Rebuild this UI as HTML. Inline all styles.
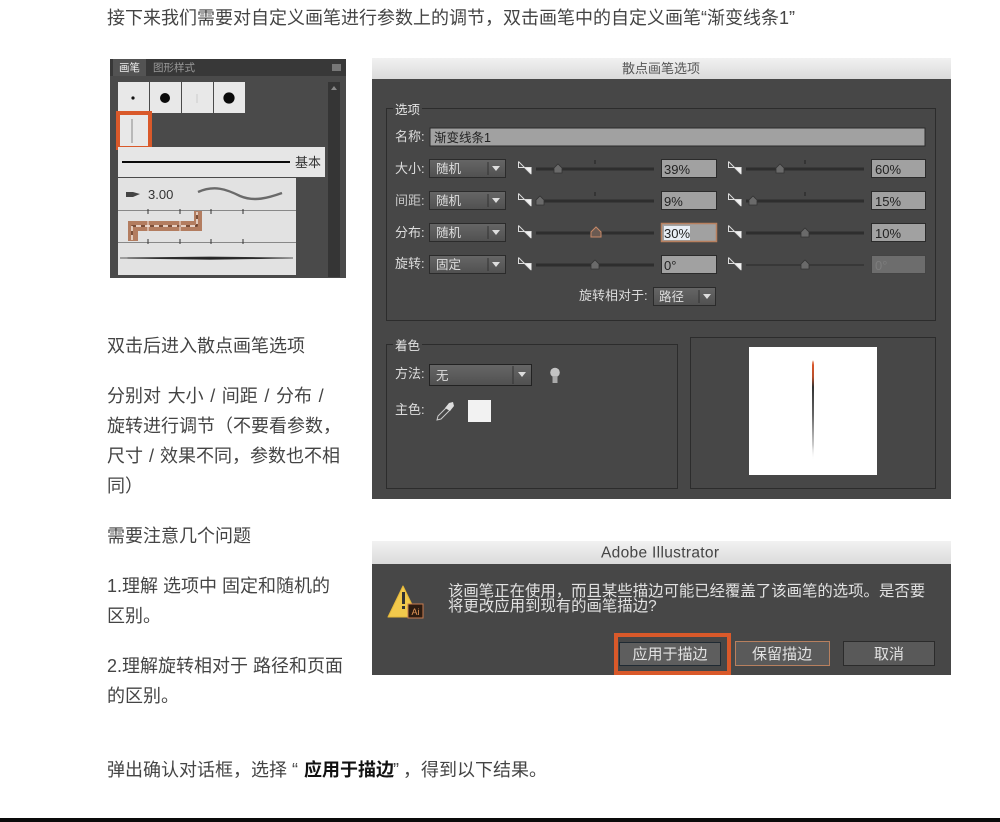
<!DOCTYPE html>
<html lang="zh-CN">
<head>
<meta charset="utf-8">
<title>散点画笔选项</title>
<style>
html,body{margin:0;padding:0;background:#fff}
body{width:1000px;height:822px;position:relative;overflow:hidden;font-family:"Liberation Sans","Noto Sans CJK SC",sans-serif}
p{position:absolute;left:107px;margin:0;font-size:18px;line-height:30px;color:#444;white-space:nowrap}
b{color:#111;font-weight:700;margin-left:6px;margin-right:-1px}
svg{position:absolute;left:0;top:0;filter:blur(.3px)}
svg text{font-family:"Liberation Sans","Noto Sans CJK SC",sans-serif}
#bar{position:absolute;left:0;top:818px;width:1000px;height:4px;background:#0a0a0a}
</style>
</head>
<body>
<p style="top:3px">接下来我们需要对自定义画笔进行参数上的调节，双击画笔中的自定义画笔“渐变线条1”</p>
<p style="top:331px">双击后进入散点画笔选项</p>
<p style="top:381px"><span style="word-spacing:1.6px">分别对 大小 / 间距 / 分布 /</span><br>旋转进行调节（不要看参数，<br><span style="word-spacing:1px">尺寸 / 效果不同，参数也不相</span><br>同）</p>
<p style="top:521px">需要注意几个问题</p>
<p style="top:571px">1.理解 选项中 固定和随机的<br>区别。</p>
<p style="top:651px">2.理解旋转相对于 路径和页面<br>的区别。</p>
<p style="top:755px">弹出确认对话框，选择 “<b>应用于描边</b>”<span style="margin-left:4px">，得到以下结果。</span></p>

<svg width="1000" height="822" viewBox="0 0 1000 822" xmlns="http://www.w3.org/2000/svg">
<defs>
<linearGradient id="tb" x1="0" y1="0" x2="0" y2="1"><stop offset="0" stop-color="#f1f1f1"/><stop offset="1" stop-color="#dadada"/></linearGradient>
<linearGradient id="cb" x1="0" y1="0" x2="0" y2="1"><stop offset="0" stop-color="#666"/><stop offset="1" stop-color="#505050"/></linearGradient>
<linearGradient id="pv" x1="0" y1="0" x2="0" y2="1"><stop offset="0" stop-color="#f3c8b4"/><stop offset=".05" stop-color="#d8562a"/><stop offset=".17" stop-color="#b8502e"/><stop offset=".27" stop-color="#333"/><stop offset=".55" stop-color="#666"/><stop offset="1" stop-color="#fff"/></linearGradient>
<g id="tri"><path d="M6 6H13.500V13.500Z" fill="#f2f2f2"/><path d="M.5 .5L13 13M.5 .5V6.500H13" fill="none" stroke="#ddd" stroke-width="1"/></g>
<g id="th"><path d="M-4 5V0L0-4L4 0V5Z" fill="#6a6a6a" stroke="#333" stroke-width=".8"/></g>
<g id="ar"><path d="M-4 0H4L0 5Z" fill="#ddd"/></g>
</defs>

<!-- brush panel -->
<rect x="110" y="59" width="236" height="219" fill="#4a4a4a"/>
<rect x="110" y="59" width="236" height="17" fill="#383838"/>
<rect x="113" y="59" width="33" height="17" fill="#535353"/>
<text x="119" y="71" font-size="10.500" fill="#eee">画笔</text>
<text x="153" y="71" font-size="10.500" fill="#9a9a9a">图形样式</text>
<rect x="332" y="64" width="9" height="7" fill="#777"/>
<rect x="328" y="82" width="12" height="195" fill="#353535"/>
<path d="M334 86L337 90H331Z" fill="#888"/>
<rect x="118" y="82" width="31" height="31" fill="#e8e8e8"/>
<rect x="150" y="82" width="31" height="31" fill="#e8e8e8"/>
<rect x="182" y="82" width="31" height="31" fill="#e8e8e8"/>
<rect x="214" y="82" width="31" height="31" fill="#e8e8e8"/>
<circle cx="133" cy="98" r="1.600" fill="#111"/>
<circle cx="165" cy="98" r="5" fill="#0a0a0a"/>
<path d="M197 94V103" stroke="#ccc" stroke-width="1"/>
<circle cx="229" cy="98" r="5.600" fill="#0a0a0a"/>
<rect x="118" y="113" width="32" height="35" fill="#e8e8e8"/>
<rect x="118" y="113" width="32" height="35" fill="none" stroke="#d9592a" stroke-width="4"/>
<path d="M132 119V143" stroke="#888" stroke-width="1"/>
<rect x="118" y="147" width="207" height="30" fill="#e6e6e6"/>
<rect x="122" y="161" width="168" height="2" fill="#0a0a0a"/>
<text x="295" y="167" font-size="13" fill="#333">基本</text>
<rect x="118" y="178" width="178" height="32" fill="#e2e2e2"/>
<path d="M126 192H133L140 194L133 197H126Z" fill="#444"/>
<text x="148" y="199" font-size="13" fill="#333">3.00</text>
<path d="M198 192C214 185 226 189 240 196C254 202 268 198 282 193" fill="none" stroke="#6a6a6a" stroke-width="2.400"/>
<rect x="118" y="211" width="178" height="31" fill="#e2e2e2"/>
<path d="M128 221H194V210H202V231H138V241H128Z" fill="#b37d60"/>
<path d="M132 240V226H197V212" fill="none" stroke="#5a3320" stroke-width="1.200"/>
<path d="M132 240V226H197V212" fill="none" stroke="#fff3ea" stroke-width="1.400" stroke-dasharray="5 4"/>
<path d="M148 221V231M180 221V231" stroke="#f4e8df"/>
<rect x="118" y="243" width="178" height="32" fill="#e2e2e2"/>
<path d="M120 258L210 257L293 258L210 259.400Z" fill="#222" stroke="#333" stroke-width=".8"/>
<path d="M118 210.500H296M118 242.500H296" stroke="#888" stroke-width="1"/>
<path d="M148 209V214M180 209V214M211 209V214M243 209V214M148 239V244M180 239V244M211 239V244M243 239V244" stroke="#333"/>

<!-- brush options dialog -->
<rect x="372" y="58" width="579" height="441" fill="#474747"/>
<rect x="372" y="58" width="579" height="21" fill="url(#tb)"/>
<text x="661" y="73" font-size="13" fill="#555" text-anchor="middle">散点画笔选项</text>

<rect x="386.500" y="108.500" width="549" height="212" fill="none" stroke="#2c2c2c"/>
<rect x="393" y="102" width="29" height="12" fill="#474747"/>
<text x="395" y="114" font-size="12.500" fill="#e4e4e4">选项</text>

<text x="395" y="141" font-size="13" fill="#ddd">名称:</text>
<rect x="430" y="128" width="495" height="18" fill="#a1a1a1" stroke="#2b2b2b"/>
<text x="434" y="142" font-size="12.500" fill="#222">渐变线条1</text>

<!-- rows -->
<g font-size="13" fill="#ddd">
<text x="395" y="173">大小:</text>
<text x="395" y="205" fill="#c8c8c8">间距:</text>
<text x="395" y="237">分布:</text>
<text x="395" y="268">旋转:</text>
<text x="579" y="300">旋转相对于:</text>
</g>
<g id="combos" font-size="12.500" fill="#ddd">
<rect x="429.500" y="159.500" width="76" height="18" fill="url(#cb)" stroke="#2b2b2b"/>
<rect x="429.500" y="191.500" width="76" height="18" fill="url(#cb)" stroke="#2b2b2b"/>
<rect x="429.500" y="223.500" width="76" height="18" fill="url(#cb)" stroke="#2b2b2b"/>
<rect x="429.500" y="255.500" width="76" height="18" fill="url(#cb)" stroke="#2b2b2b"/>
<rect x="653.500" y="287.500" width="62" height="18" fill="url(#cb)" stroke="#2b2b2b"/>
<text x="436" y="173">随机</text>
<text x="436" y="205">随机</text>
<text x="436" y="237">随机</text>
<text x="436" y="269">固定</text>
<text x="659" y="301">路径</text>
<path d="M488 162V175M488 194V207M488 226V239M488 258V271M699 290V303" stroke="#333"/>
<use href="#ar" x="496" y="166"/><use href="#ar" x="496" y="198"/><use href="#ar" x="496" y="230"/><use href="#ar" x="496" y="262"/><use href="#ar" x="707" y="294"/>
</g>

<!-- sliders -->
<g>
<use href="#tri" x="518" y="161"/><use href="#tri" x="518" y="193"/><use href="#tri" x="518" y="225"/><use href="#tri" x="518" y="257"/>
<use href="#tri" x="728" y="161"/><use href="#tri" x="728" y="193"/><use href="#tri" x="728" y="225"/><use href="#tri" x="728" y="257"/>
<path d="M536 169H654M536 201H654M536 233H654M536 265H654M746 169H864M746 201H864M746 233H864" stroke="#2e2e2e" stroke-width="3"/>
<path d="M746 265H864" stroke="#383838" stroke-width="2"/>
<path d="M595 160V164M595 192V196M805 160V164M805 192V196" stroke="#222"/>
<use href="#th" x="558" y="168"/><use href="#th" x="540" y="200"/><use href="#th" x="595" y="264"/>
<path d="M591 237V232L596 227L601 232V237Z" fill="#6a5a52" stroke="#c98a68"/>
<use href="#th" x="780" y="168"/><use href="#th" x="753" y="200"/><use href="#th" x="805" y="232"/><use href="#th" x="805" y="264"/>
</g>

<!-- value fields -->
<g fill="#a1a1a1" stroke="#2b2b2b">
<rect x="661.500" y="159.500" width="55" height="18"/><rect x="661.500" y="191.500" width="55" height="18"/>
<rect x="661.500" y="223.500" width="55" height="18" stroke="#b8805f" stroke-width="1.500"/><rect x="661.500" y="255.500" width="55" height="18"/>
<rect x="871.500" y="159.500" width="54" height="18"/><rect x="871.500" y="191.500" width="54" height="18"/>
<rect x="871.500" y="223.500" width="54" height="18"/>
<rect x="871.500" y="255.500" width="54" height="18" fill="#6d6d6d" stroke="#444"/>
</g>
<rect x="664" y="226" width="26" height="14" fill="#e8eef5"/>
<g font-size="13" fill="#222">
<text x="664" y="174">39%</text><text x="664" y="206">9%</text><text x="664" y="238">30%</text><text x="664" y="270">0°</text>
<text x="875" y="174">60%</text><text x="875" y="206">15%</text><text x="875" y="238">10%</text><text x="875" y="270" fill="#7d7d7d">0°</text>
</g>

<!-- colorize -->
<rect x="386.500" y="344.500" width="291" height="144" fill="none" stroke="#2c2c2c"/>
<rect x="393" y="338" width="29" height="12" fill="#474747"/>
<text x="395" y="350" font-size="12.500" fill="#e4e4e4">着色</text>
<text x="395" y="378" font-size="13" fill="#ddd">方法:</text>
<rect x="429.500" y="364.500" width="102" height="21" fill="url(#cb)" stroke="#222"/>
<text x="436" y="380" font-size="12.500" fill="#ddd">无</text>
<path d="M513 366V384" stroke="#333"/>
<use href="#ar" x="522" y="372"/>
<circle cx="555" cy="372.500" r="4.800" fill="#c4c4c4"/>
<rect x="552.500" y="376" width="5" height="7" fill="#aaa"/>
<path d="M437 420L438 416L447 407L450 410L441 419Z" fill="none" stroke="#ccc"/>
<path d="M445 408L449 403L453 402L454 406L450 411Z" fill="#ddd"/>
<text x="395" y="414" font-size="13" fill="#ddd">主色:</text>
<rect x="468" y="400" width="23" height="22" fill="#f2f2f2"/>

<rect x="690.500" y="337.500" width="245" height="151" fill="none" stroke="#2c2c2c"/>
<rect x="749" y="347" width="128" height="128" fill="#fff"/>
<path d="M812 362L813 360L814 362V445L813 460L812 445Z" fill="url(#pv)"/>

<!-- alert dialog -->
<rect x="372" y="541" width="579" height="134" fill="#474747"/>
<rect x="372" y="541" width="579" height="23" fill="url(#tb)"/>
<text x="660" y="557.500" font-size="15.500" fill="#444" text-anchor="middle" textLength="118">Adobe Illustrator</text>
<path d="M403 586L388 617H418Z" fill="#f2c94c" stroke="#e5b83a" stroke-linejoin="round"/>
<rect x="402" y="592" width="3" height="12" fill="#333"/>
<rect x="402" y="606" width="3" height="3" fill="#333"/>
<rect x="408" y="604" width="15" height="14" fill="#2c1b10" stroke="#c77b4f"/>
<text x="415.500" y="615" font-size="9" fill="#e89a5a" text-anchor="middle">Ai</text>
<g font-size="15.400" fill="#e2e2e2">
<text x="448" y="596">该画笔正在使用，而且某些描边可能已经覆盖了该画笔的选项。是否要</text>
<text x="448" y="611">将更改应用到现有的画笔描边?</text>
</g>
<rect x="616" y="635" width="113" height="38" fill="none" stroke="#d9592a" stroke-width="4"/>
<rect x="619.500" y="642.500" width="101" height="23" fill="#5e5e5e" stroke="#1f2a33"/>
<rect x="735.500" y="641.500" width="94" height="24" fill="#5a5a5a" stroke="#b8805f"/>
<rect x="843.500" y="641.500" width="91" height="24" fill="#595959" stroke="#2b2b2b"/>
<g font-size="15" fill="#e2e2e2" text-anchor="middle">
<text x="670" y="659">应用于描边</text>
<text x="782" y="659">保留描边</text>
<text x="889" y="659">取消</text>
</g>
</svg>
<div id="bar"></div>
</body>
</html>
